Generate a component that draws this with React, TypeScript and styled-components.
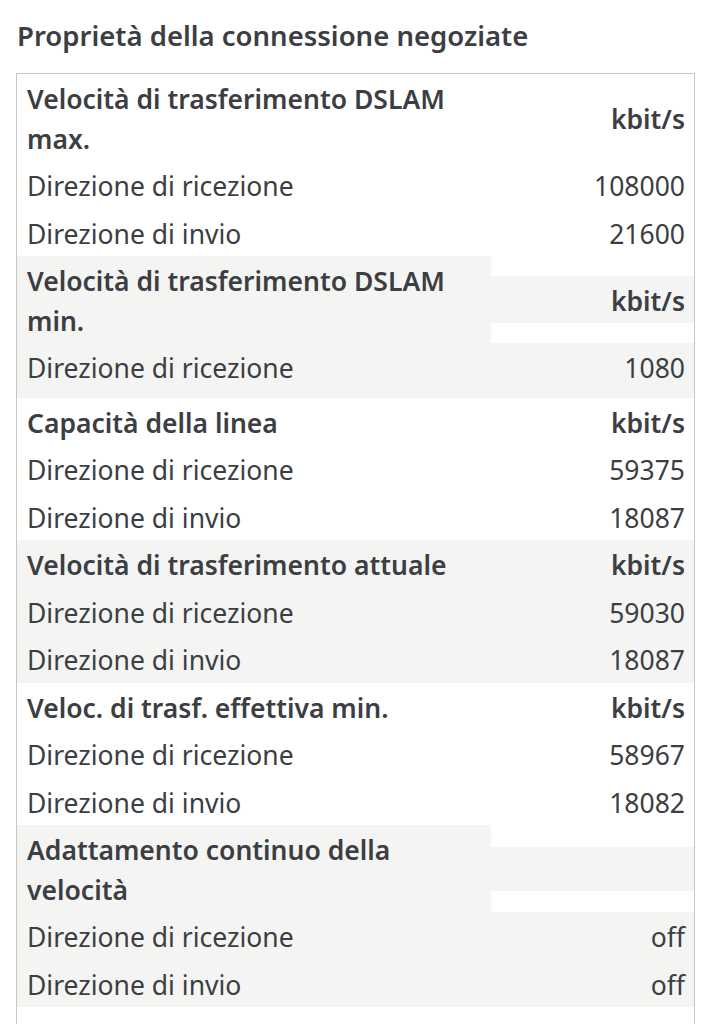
import React from "react";
import styled, { createGlobalStyle } from "styled-components";

type Line = { label: string; value: string };
type Group = {
  title: string;
  unit?: string;
  shade: boolean;
  extra?: boolean;
  lines: Line[];
};

// dati della tabella "Proprietà della connessione negoziate"
const groups: Group[] = [
  {
    title: "Velocità di trasferimento DSLAM max.",
    unit: "kbit/s",
    shade: false,
    lines: [
      { label: "Direzione di ricezione", value: "108000" },
      { label: "Direzione di invio", value: "21600" },
    ],
  },
  {
    title: "Velocità di trasferimento DSLAM min.",
    unit: "kbit/s",
    shade: true,
    extra: true,
    lines: [{ label: "Direzione di ricezione", value: "1080" }],
  },
  {
    title: "Capacità della linea",
    unit: "kbit/s",
    shade: false,
    lines: [
      { label: "Direzione di ricezione", value: "59375" },
      { label: "Direzione di invio", value: "18087" },
    ],
  },
  {
    title: "Velocità di trasferimento attuale",
    unit: "kbit/s",
    shade: true,
    lines: [
      { label: "Direzione di ricezione", value: "59030" },
      { label: "Direzione di invio", value: "18087" },
    ],
  },
  {
    title: "Veloc. di trasf. effettiva min.",
    unit: "kbit/s",
    shade: false,
    lines: [
      { label: "Direzione di ricezione", value: "58967" },
      { label: "Direzione di invio", value: "18082" },
    ],
  },
  {
    title: "Adattamento continuo della velocità",
    shade: true,
    lines: [
      { label: "Direzione di ricezione", value: "off" },
      { label: "Direzione di invio", value: "off" },
    ],
  },
];

export default function App() {
  return (
    <>
      <GlobalStyle />
      <Page>
        <Title>Proprietà della connessione negoziate</Title>
        <Table>
          {groups.map((g) => (
            <Section key={g.title} $shade={g.shade}>
              <HeadRow>
                <HeadLabel>{g.title}</HeadLabel>
                {g.unit ? <Unit>{g.unit}</Unit> : <EmptyUnit />}
              </HeadRow>
              {g.lines.map((l, i) => (
                <Row key={l.label} $extra={!!g.extra && i === g.lines.length - 1}>
                  <Label>{l.label}</Label>
                  <Value>{l.value}</Value>
                </Row>
              ))}
            </Section>
          ))}
          <Filler />
        </Table>
      </Page>
    </>
  );
}

const GlobalStyle = createGlobalStyle`
  body {
    margin: 0;
    background: #ffffff;
    font-family: "Noto Sans", "Open Sans", sans-serif;
    color: #3b3e43;
  }
`;

const Page = styled.div`
  padding: 18px 17px 0 16px;
`;

const Title = styled.h2`
  margin: 0 0 19px 1px;
  font-size: 27.5px;
  line-height: 36px;
  font-weight: 600;
  color: #3b3e43;
`;

const Table = styled.div`
  display: flex;
  flex-direction: column;
  border: 1px solid #c6c6c6;
  border-bottom: none;
`;

const Section = styled.div<{ $shade: boolean }>`
  --row-bg: ${(p) => (p.$shade ? "#f4f4f2" : "#ffffff")};
  display: flex;
  flex-direction: column;
  background: #ffffff;
`;

const HeadRow = styled.div`
  display: flex;
  align-items: center;
  font-weight: 600;
`;

const HeadLabel = styled.div`
  flex: 1;
  align-self: stretch;
  padding: 6px 0 2px 10px;
  font-size: 26.5px;
  line-height: 39.5px;
  background: var(--row-bg);
`;

const Unit = styled.div`
  width: 203px;
  padding: 6px 9px 2px 0;
  box-sizing: border-box;
  text-align: right;
  font-size: 26.5px;
  line-height: 39.5px;
  background: var(--row-bg);
`;

const EmptyUnit = styled.div`
  width: 203px;
  height: 44px;
  background: var(--row-bg);
`;

const Row = styled.div<{ $extra: boolean }>`
  display: flex;
  background: var(--row-bg);
  padding-bottom: ${(p) => (p.$extra ? "7px" : "0")};
`;

const Label = styled.div`
  flex: 1;
  padding: 6px 0 2px 10px;
  font-size: 26.5px;
  line-height: 39.5px;
`;

const Value = styled.div`
  width: 203px;
  padding: 6px 9px 2px 0;
  box-sizing: border-box;
  text-align: right;
  font-size: 26.5px;
  line-height: 39.5px;
`;

const Filler = styled.div`
  height: 60px;
  background: #ffffff;
`;
